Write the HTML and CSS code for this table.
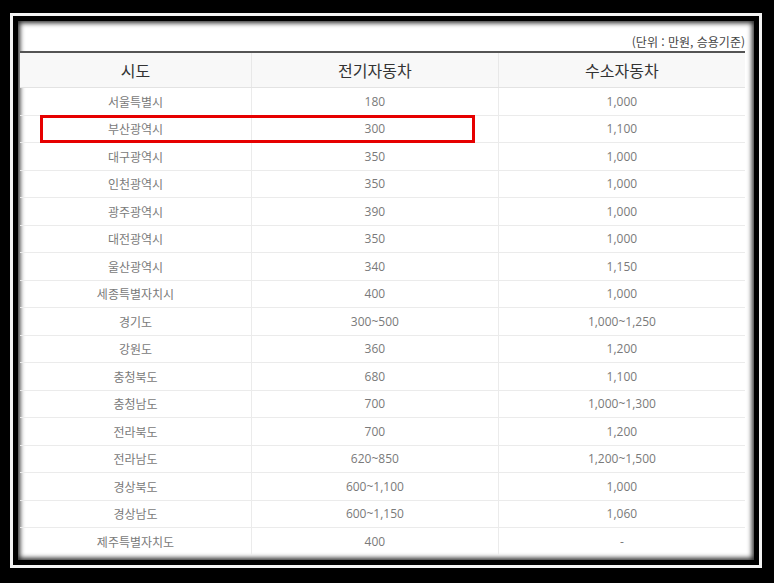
FILE: index.html
```html
<!DOCTYPE html>
<html lang="ko">
<head>
<meta charset="utf-8">
<link rel="stylesheet" href="styles.css">
</head>
<body>
<div class="frame">
  <div class="content">
    <div class="caption">(단위 : 만원, 승용기준)</div>
    <table class="grid">
      <thead>
        <tr><th class="c1">시도</th><th>전기자동차</th><th>수소자동차</th></tr>
      </thead>
      <tbody>
        <tr><td>서울특별시</td><td>180</td><td>1,000</td></tr>
        <tr><td>부산광역시</td><td>300</td><td>1,100</td></tr>
        <tr><td>대구광역시</td><td>350</td><td>1,000</td></tr>
        <tr><td>인천광역시</td><td>350</td><td>1,000</td></tr>
        <tr><td>광주광역시</td><td>390</td><td>1,000</td></tr>
        <tr><td>대전광역시</td><td>350</td><td>1,000</td></tr>
        <tr><td>울산광역시</td><td>340</td><td>1,150</td></tr>
        <tr><td>세종특별자치시</td><td>400</td><td>1,000</td></tr>
        <tr><td>경기도</td><td>300~500</td><td>1,000~1,250</td></tr>
        <tr><td>강원도</td><td>360</td><td>1,200</td></tr>
        <tr><td>충청북도</td><td>680</td><td>1,100</td></tr>
        <tr><td>충청남도</td><td>700</td><td>1,000~1,300</td></tr>
        <tr><td>전라북도</td><td>700</td><td>1,200</td></tr>
        <tr><td>전라남도</td><td>620~850</td><td>1,200~1,500</td></tr>
        <tr><td>경상북도</td><td>600~1,100</td><td>1,000</td></tr>
        <tr><td>경상남도</td><td>600~1,150</td><td>1,060</td></tr>
        <tr><td>제주특별자치도</td><td>400</td><td>-</td></tr>
      </tbody>
    </table>
    <div class="highlight"></div>
  </div>
</div>
</body>
</html>
```

FILE: styles.css
```css
html, body {
  margin: 0;
  padding: 0;
  background: #000;
}
body {
  width: 774px;
  height: 583px;
  overflow: hidden;
  font-family: "Open Sans", "Noto Sans CJK KR", sans-serif;
}
.frame {
  margin: 13px 12px 15px 10px;
  border: 3px solid #f4f4f4;
  padding: 5px;
  background: #000;
  width: 736px;
}
.content {
  position: relative;
  width: 736px;
  height: 539px;
  background: #fff;
  box-shadow: inset 0 0 5px 2px rgba(0,0,0,0.85);
  padding: 0 9px 0 2px;
  box-sizing: border-box;
}
.caption {
  height: 30px;
  box-sizing: border-box;
  padding-top: 13px;
  text-align: right;
  font-family: "Noto Sans CJK KR", sans-serif;
  font-size: 12px;
  line-height: 16px;
  color: #444;
}
.grid {
  width: 725px;
  border-collapse: collapse;
  border-top: 2px solid #555;
  table-layout: fixed;
}
.grid th {
  height: 34px;
  background: #f8f8f8;
  font-family: "Noto Sans CJK KR", sans-serif;
  font-weight: 400;
  font-size: 16px;
  color: #333;
  border-bottom: 1px solid #e3e3e3;
  border-left: 1px solid #e8e8e8;
  padding: 0;
}
.grid th.c1 { width: 231px; border-left: none; }
.grid td {
  height: 26.5px;
  padding: 0;
  text-align: center;
  font-size: 12px;
  color: #7a7a7a;
  border-bottom: 1px solid #ebebeb;
  border-left: 1px solid #ebebeb;
}
.grid td:first-child {
  border-left: none;
  font-family: "Noto Sans CJK KR", sans-serif;
}
.grid tr:last-child td { border-bottom: none; }
.highlight {
  position: absolute;
  left: 22px;
  top: 94px;
  width: 435px;
  height: 28px;
  border: 3px solid #e60000;
  box-sizing: border-box;
}
```
